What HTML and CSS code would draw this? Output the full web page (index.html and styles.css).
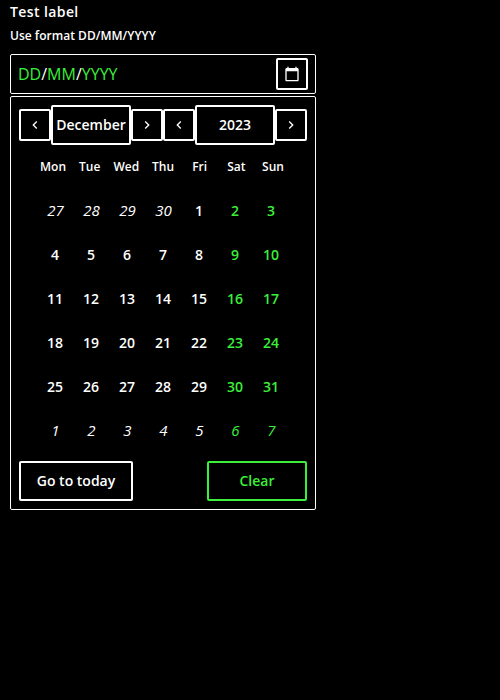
FILE: index.html
```
<!DOCTYPE html>
<html lang="en">
<head>
<meta charset="utf-8">
<title>Date picker</title>
<link rel="stylesheet" href="styles.css">
</head>
<body>
<div class="field">
  <label class="label">Test label</label>
  <div class="hint">Use format DD/MM/YYYY</div>
  <div class="input">
    <div class="mask"><span>DD</span>/<span>MM</span>/<span>YYYY</span></div>
    <button class="toggle" aria-label="Open calendar"><svg width="16" height="16" viewBox="0 0 24 24" fill="#fff"><path d="M20 3h-1V1h-2v2H7V1H5v2H4c-1.100 0-2 .9-2 2v16c0 1.100.9 2 2 2h16c1.100 0 2-.9 2-2V5c0-1.100-.9-2-2-2zm0 18H4V8h16v13z"/></svg></button>
  </div>
  <div class="calendar">
    <div class="nav">
      <button class="arrow" aria-label="Previous month"><svg width="16" height="16" viewBox="0 0 24 24"><path d="M15.410 7.410L14 6l-6 6 6 6 1.410-1.410L10.830 12z"/></svg></button>
      <button class="pick">December</button>
      <button class="arrow" aria-label="Next month"><svg width="16" height="16" viewBox="0 0 24 24"><path d="M10 6L8.590 7.410 13.170 12l-4.580 4.590L10 18l6-6z"/></svg></button>
      <button class="arrow" aria-label="Previous year"><svg width="16" height="16" viewBox="0 0 24 24"><path d="M15.410 7.410L14 6l-6 6 6 6 1.410-1.410L10.830 12z"/></svg></button>
      <button class="pick">2023</button>
      <button class="arrow" aria-label="Next year"><svg width="16" height="16" viewBox="0 0 24 24"><path d="M10 6L8.590 7.410 13.170 12l-4.580 4.590L10 18l6-6z"/></svg></button>
    </div>
    <div class="week"><span>Mon</span><span>Tue</span><span>Wed</span><span>Thu</span><span>Fri</span><span>Sat</span><span>Sun</span></div>
    <div class="days">
      <i>27</i><i>28</i><i>29</i><i>30</i><b>1</b><b>2</b><b>3</b>
      <b>4</b><b>5</b><b>6</b><b>7</b><b>8</b><b>9</b><b>10</b>
      <b>11</b><b>12</b><b>13</b><b>14</b><b>15</b><b>16</b><b>17</b>
      <b>18</b><b>19</b><b>20</b><b>21</b><b>22</b><b>23</b><b>24</b>
      <b>25</b><b>26</b><b>27</b><b>28</b><b>29</b><b>30</b><b>31</b>
      <i>1</i><i>2</i><i>3</i><i>4</i><i>5</i><i>6</i><i>7</i>
    </div>
    <div class="actions"><button class="today">Go to today</button><button class="clear">Clear</button></div>
  </div>
</div>
</body>
</html>
```
FILE: styles.css
```
* { box-sizing: border-box; }
body { margin: 0; background: #000; color: #fff; font-family: "Open Sans", sans-serif; }
.field { width: 306px; margin-left: 10px; }
.label { display: block; height: 24px; line-height: 24px; font-size: 14px; font-weight: 600; letter-spacing: .4px; }
.hint { height: 24px; line-height: 24px; margin-bottom: 6px; font-size: 12px; font-weight: 600; letter-spacing: .02px; }
.input { display: flex; align-items: center; justify-content: space-between; height: 40px; padding: 0 7px; border: 1px solid #fff; border-radius: 2px; }
.mask { font-size: 16px; line-height: 24px; }
.mask span { color: #3aef3a; }
button { display: flex; align-items: center; justify-content: center; padding: 0; border: 2px solid #fff; border-radius: 2px; background: #000; color: #fff; font: 600 14px/20px "Open Sans", sans-serif; }
.toggle { width: 32px; height: 32px; }
.calendar { height: 414px; margin-top: 2px; padding: 8px; border: 1px solid #fff; border-radius: 2px; }
.nav { display: flex; align-items: center; height: 40px; }
.arrow { width: 32px; height: 32px; }
.arrow path { fill: #fff; }
.pick { width: 80px; height: 40px; }
.week { display: grid; grid-template-columns: repeat(7, 36.67px); justify-content: center; height: 44px; line-height: 44px; font-size: 12px; font-weight: 600; text-align: center; }
.days { display: grid; grid-template-columns: repeat(7, 36px); grid-auto-rows: 44px; width: 252px; margin-left: 18px; line-height: 44px; font-size: 14px; text-align: center; }
.days b { font-weight: 600; }
.days i { padding-left: 1px; font-size: 15px; line-height: 42px; font-weight: 400; }
.days > :nth-child(7n), .days > :nth-child(7n + 6) { color: #3aef3a; }
.actions { display: flex; justify-content: space-between; margin-top: 8px; }
.actions button { height: 40px; }
.today { width: 114px; }
.actions .clear { width: 100px; border-color: #3aef3a; color: #3aef3a; }
```
